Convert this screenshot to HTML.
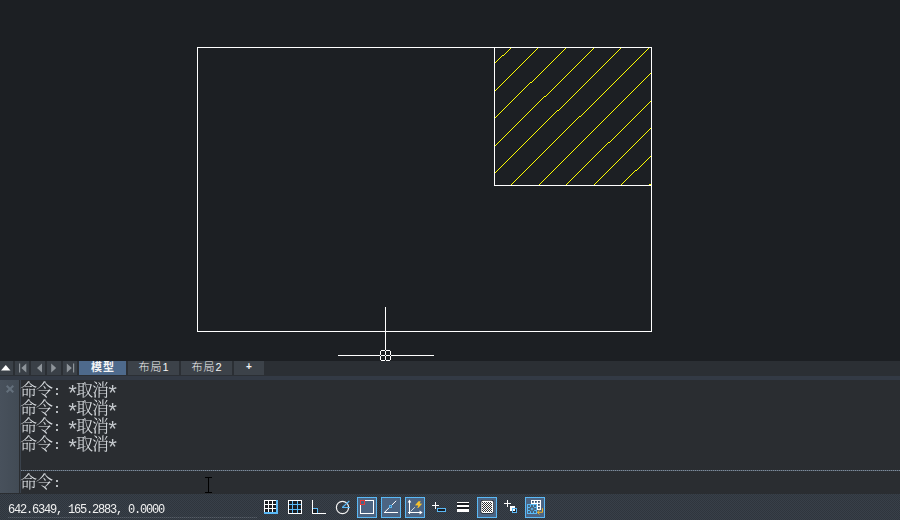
<!DOCTYPE html>
<html lang="zh-CN">
<head>
<meta charset="utf-8">
<title>CAD</title>
<style>
html,body{margin:0;padding:0;}
body{width:900px;height:520px;overflow:hidden;background:#1c1f23;position:relative;font-family:"Liberation Sans","Noto Sans CJK SC",sans-serif;}
.abs{position:absolute;}
#canvas{left:0;top:0;width:900px;height:361px;background:#1c1f23;overflow:hidden;}
#tabbar{left:0;top:361px;width:900px;height:15px;background:#2b2f34;}
.nb{position:absolute;top:0;height:14px;width:14px;background:#3a4047;}
.tab{position:absolute;top:0;height:14px;background:#3c4249;color:#f4f4f4;font-size:11px;letter-spacing:1px;text-indent:1px;line-height:13px;text-align:center;white-space:nowrap;font-weight:300;}
.tab.on{background:#4e6a8c;font-weight:bold;}
#band{left:0;top:376px;width:900px;height:4px;background:#333a45;}
#cmd{left:0;top:380px;width:900px;height:114px;background:#2a2d31;}
#side{left:0;top:0;width:19px;height:113px;background:linear-gradient(90deg,#48515c,#424b55);}
#vline{left:20px;top:0;width:1px;height:113px;background:#3a424c;}
.cl{will-change:transform;position:absolute;left:21px;height:18px;line-height:18px;color:#dde1e5;white-space:pre;font-size:0;}
.cl .c{font-family:"Liberation Serif","Noto Serif CJK SC",serif;font-size:17px;letter-spacing:-1px;font-weight:300;display:inline-block;width:32px;vertical-align:top;line-height:18px;position:relative;top:2px;left:-1px;}
.cl .l{font-family:"Liberation Mono",monospace;font-size:13.333px;display:inline-block;vertical-align:top;line-height:18px;position:relative;top:3px;}
.cl .l i{color:#c4c8cc;font-style:normal;display:inline-block;width:8px;text-align:center;font-size:22px;line-height:18px;vertical-align:top;position:relative;top:4px;text-indent:-3px;}
#sep{left:21px;top:90px;width:879px;height:1px;background:repeating-linear-gradient(90deg,#7f8b98 0,#7f8b98 1px,#4a5664 1px,#4a5664 2px);}
#status{left:0;top:494px;width:900px;height:26px;background:#333942 repeating-conic-gradient(#384049 0 25%,#2f353d 0 50%) 0 0/2px 2px;}
#coords{will-change:transform;left:8px;top:10px;font-family:"Liberation Mono",monospace;font-size:12px;letter-spacing:-1.2px;color:#f0f0f0;line-height:12px;white-space:pre;}
#uline{left:8px;top:23px;width:249px;height:1px;background:repeating-linear-gradient(90deg,#565d66 0,#565d66 1px,#3b424b 1px,#3b424b 2px);}
</style>
</head>
<body>
<div id="canvas" class="abs">
<svg width="900" height="361" viewBox="0 0 900 361" shape-rendering="crispEdges" style="position:absolute;left:0;top:0">
  <path id="hatch" d="M510 48.5h1m-2 1h1m-2 1h1m-2 1h1m-2 1h1m-2 1h1m-2 1h1m-3 1h2m-3 1h1m-2 1h1m-2 1h1m-2 1h1m-2 1h1m-2 1h1m-2 1h1M537 48.5h1m-2 1h1m-2 1h1m-2 1h1m-2 1h1m-2 1h1m-2 1h1m-2 1h1m-2 1h1m-2 1h1m-2 1h1m-2 1h1m-2 1h1m-2 1h1m-2 1h1m-2 1h1m-2 1h1m-2 1h1m-2 1h1m-2 1h1m-2 1h1m-2 1h1m-2 1h1m-2 1h1m-2 1h1m-2 1h1m-2 1h1m-2 1h1m-2 1h1m-2 1h1m-2 1h1m-2 1h1m-2 1h1m-2 1h1m-2 1h1m-2 1h1m-2 1h1m-2 1h1m-2 1h1m-2 1h1m-2 1h1m-2 1h1m-2 1h1M565 48.5h1m-2 1h1m-2 1h1m-2 1h1m-2 1h1m-2 1h1m-2 1h1m-2 1h1m-2 1h1m-2 1h1m-2 1h1m-2 1h1m-2 1h1m-2 1h1m-2 1h1m-2 1h1m-2 1h1m-2 1h1m-2 1h1m-2 1h1m-2 1h1m-2 1h1m-2 1h1m-2 1h1m-2 1h1m-2 1h1m-2 1h1m-2 1h1m-2 1h1m-2 1h1m-2 1h1m-2 1h1m-2 1h1m-2 1h1m-3 1h2m-3 1h1m-2 1h1m-2 1h1m-2 1h1m-2 1h1m-2 1h1m-2 1h1m-2 1h1m-2 1h1m-2 1h1m-2 1h1m-2 1h1m-2 1h1m-2 1h1m-2 1h1m-2 1h1m-2 1h1m-2 1h1m-2 1h1m-2 1h1m-2 1h1m-2 1h1m-2 1h1m-2 1h1m-2 1h1m-2 1h1m-2 1h1m-2 1h1m-2 1h1m-2 1h1m-2 1h1m-2 1h1m-2 1h1m-2 1h1m-2 1h1M593 48.5h1m-2 1h1m-2 1h1m-2 1h1m-2 1h1m-2 1h1m-2 1h1m-2 1h1m-2 1h1m-2 1h1m-2 1h1m-2 1h1m-2 1h1m-2 1h1m-2 1h1m-2 1h1m-2 1h1m-2 1h1m-2 1h1m-2 1h1m-2 1h1m-2 1h1m-2 1h1m-2 1h1m-2 1h1m-2 1h1m-2 1h1m-2 1h1m-2 1h1m-2 1h1m-2 1h1m-2 1h1m-2 1h1m-2 1h1m-2 1h1m-2 1h1m-2 1h1m-2 1h1m-2 1h1m-2 1h1m-2 1h1m-2 1h1m-2 1h1m-2 1h1m-2 1h1m-2 1h1m-2 1h1m-2 1h1m-3 1h2m-3 1h1m-2 1h1m-2 1h1m-2 1h1m-2 1h1m-2 1h1m-2 1h1m-2 1h1m-2 1h1m-2 1h1m-2 1h1m-2 1h1m-2 1h1m-2 1h1m-2 1h1m-2 1h1m-2 1h1m-2 1h1m-2 1h1m-2 1h1m-2 1h1m-2 1h1m-2 1h1m-2 1h1m-2 1h1m-2 1h1m-2 1h1m-2 1h1m-2 1h1m-2 1h1m-2 1h1m-2 1h1m-2 1h1m-2 1h1m-2 1h1m-2 1h1m-2 1h1m-2 1h1m-2 1h1m-2 1h1m-2 1h1m-2 1h1m-2 1h1m-2 1h1m-2 1h1m-2 1h1m-2 1h1m-2 1h1m-2 1h1M620 48.5h1m-2 1h1m-2 1h1m-2 1h1m-2 1h1m-2 1h1m-2 1h1m-2 1h1m-2 1h1m-2 1h1m-2 1h1m-2 1h1m-2 1h1m-2 1h1m-2 1h1m-2 1h1m-2 1h1m-2 1h1m-2 1h1m-2 1h1m-2 1h1m-2 1h1m-2 1h1m-2 1h1m-2 1h1m-2 1h1m-2 1h1m-2 1h1m-2 1h1m-2 1h1m-2 1h1m-2 1h1m-2 1h1m-2 1h1m-2 1h1m-2 1h1m-2 1h1m-2 1h1m-2 1h1m-2 1h1m-2 1h1m-2 1h1m-2 1h1m-2 1h1m-2 1h1m-2 1h1m-2 1h1m-2 1h1m-2 1h1m-2 1h1m-2 1h1m-2 1h1m-2 1h1m-2 1h1m-2 1h1m-2 1h1m-2 1h1m-2 1h1m-2 1h1m-2 1h1m-2 1h1m-2 1h1m-3 1h2m-3 1h1m-2 1h1m-2 1h1m-2 1h1m-2 1h1m-2 1h1m-2 1h1m-2 1h1m-2 1h1m-2 1h1m-2 1h1m-2 1h1m-2 1h1m-2 1h1m-2 1h1m-2 1h1m-2 1h1m-2 1h1m-2 1h1m-2 1h1m-2 1h1m-2 1h1m-2 1h1m-2 1h1m-2 1h1m-2 1h1m-2 1h1m-2 1h1m-2 1h1m-2 1h1m-2 1h1m-2 1h1m-2 1h1m-2 1h1m-2 1h1m-2 1h1m-2 1h1m-2 1h1m-2 1h1m-2 1h1m-2 1h1m-2 1h1m-2 1h1m-2 1h1m-2 1h1m-2 1h1m-2 1h1m-2 1h1m-2 1h1m-2 1h1m-2 1h1m-2 1h1m-2 1h1m-2 1h1m-2 1h1m-2 1h1m-2 1h1m-2 1h1m-2 1h1m-2 1h1m-2 1h1m-2 1h1M648 48.5h1m-2 1h1m-2 1h1m-2 1h1m-2 1h1m-2 1h1m-2 1h1m-2 1h1m-2 1h1m-2 1h1m-2 1h1m-2 1h1m-2 1h1m-2 1h1m-2 1h1m-2 1h1m-2 1h1m-2 1h1m-2 1h1m-2 1h1m-2 1h1m-2 1h1m-2 1h1m-2 1h1m-2 1h1m-2 1h1m-2 1h1m-2 1h1m-2 1h1m-2 1h1m-2 1h1m-2 1h1m-2 1h1m-2 1h1m-2 1h1m-2 1h1m-2 1h1m-2 1h1m-2 1h1m-2 1h1m-2 1h1m-2 1h1m-2 1h1m-2 1h1m-2 1h1m-2 1h1m-2 1h1m-2 1h1m-2 1h1m-2 1h1m-2 1h1m-2 1h1m-2 1h1m-2 1h1m-2 1h1m-2 1h1m-2 1h1m-2 1h1m-2 1h1m-2 1h1m-2 1h1m-2 1h1m-2 1h1m-2 1h1m-2 1h1m-2 1h1m-2 1h1m-2 1h1m-3 1h2m-3 1h1m-2 1h1m-2 1h1m-2 1h1m-2 1h1m-2 1h1m-2 1h1m-2 1h1m-2 1h1m-2 1h1m-2 1h1m-2 1h1m-2 1h1m-2 1h1m-2 1h1m-2 1h1m-2 1h1m-2 1h1m-2 1h1m-2 1h1m-2 1h1m-2 1h1m-2 1h1m-2 1h1m-2 1h1m-2 1h1m-2 1h1m-2 1h1m-2 1h1m-2 1h1m-2 1h1m-2 1h1m-2 1h1m-2 1h1m-2 1h1m-2 1h1m-2 1h1m-2 1h1m-2 1h1m-2 1h1m-2 1h1m-2 1h1m-2 1h1m-2 1h1m-2 1h1m-2 1h1m-2 1h1m-2 1h1m-2 1h1m-2 1h1m-2 1h1m-2 1h1m-2 1h1m-2 1h1m-2 1h1m-2 1h1m-2 1h1m-2 1h1m-2 1h1m-2 1h1m-2 1h1m-2 1h1m-2 1h1m-2 1h1m-2 1h1m-2 1h1m-2 1h1m-2 1h1M650 73.5h1m-2 1h1m-2 1h1m-2 1h1m-2 1h1m-2 1h1m-2 1h1m-2 1h1m-2 1h1m-2 1h1m-2 1h1m-2 1h1m-2 1h1m-2 1h1m-2 1h1m-2 1h1m-2 1h1m-2 1h1m-2 1h1m-2 1h1m-2 1h1m-2 1h1m-2 1h1m-2 1h1m-2 1h1m-2 1h1m-2 1h1m-2 1h1m-2 1h1m-2 1h1m-2 1h1m-2 1h1m-2 1h1m-2 1h1m-2 1h1m-2 1h1m-2 1h1m-2 1h1m-2 1h1m-2 1h1m-2 1h1m-2 1h1m-2 1h1m-2 1h1m-2 1h1m-2 1h1m-2 1h1m-2 1h1m-2 1h1m-2 1h1m-2 1h1m-2 1h1m-2 1h1m-2 1h1m-2 1h1m-2 1h1m-2 1h1m-2 1h1m-2 1h1m-2 1h1m-2 1h1m-2 1h1m-2 1h1m-2 1h1m-2 1h1m-2 1h1m-2 1h1m-2 1h1m-2 1h1m-2 1h1m-2 1h1m-2 1h1m-2 1h1m-2 1h1m-2 1h1m-2 1h1m-2 1h1m-2 1h1m-2 1h1m-2 1h1m-2 1h1m-2 1h1m-2 1h1m-2 1h1m-2 1h1m-2 1h1m-2 1h1m-2 1h1m-2 1h1m-2 1h1m-2 1h1m-2 1h1m-2 1h1m-2 1h1m-2 1h1m-2 1h1m-2 1h1m-2 1h1m-2 1h1m-2 1h1m-2 1h1m-2 1h1m-2 1h1m-2 1h1m-2 1h1m-2 1h1m-2 1h1m-2 1h1m-2 1h1m-2 1h1m-2 1h1m-2 1h1M650 101.5h1m-2 1h1m-2 1h1m-2 1h1m-2 1h1m-2 1h1m-2 1h1m-2 1h1m-2 1h1m-2 1h1m-2 1h1m-2 1h1m-2 1h1m-2 1h1m-2 1h1m-2 1h1m-2 1h1m-2 1h1m-2 1h1m-2 1h1m-2 1h1m-2 1h1m-2 1h1m-2 1h1m-2 1h1m-2 1h1m-2 1h1m-2 1h1m-2 1h1m-2 1h1m-2 1h1m-2 1h1m-2 1h1m-2 1h1m-2 1h1m-2 1h1m-2 1h1m-2 1h1m-2 1h1m-2 1h1m-2 1h1m-3 1h2m-3 1h1m-2 1h1m-2 1h1m-2 1h1m-2 1h1m-2 1h1m-2 1h1m-2 1h1m-2 1h1m-2 1h1m-2 1h1m-2 1h1m-2 1h1m-2 1h1m-2 1h1m-2 1h1m-2 1h1m-2 1h1m-2 1h1m-2 1h1m-2 1h1m-2 1h1m-2 1h1m-2 1h1m-2 1h1m-2 1h1m-2 1h1m-2 1h1m-2 1h1m-2 1h1m-2 1h1m-2 1h1m-2 1h1m-2 1h1m-2 1h1m-2 1h1m-2 1h1m-2 1h1m-2 1h1m-2 1h1m-2 1h1m-2 1h1M650 128.5h1m-2 1h1m-2 1h1m-2 1h1m-2 1h1m-2 1h1m-2 1h1m-2 1h1m-2 1h1m-2 1h1m-2 1h1m-2 1h1m-2 1h1m-2 1h1m-2 1h1m-2 1h1m-2 1h1m-2 1h1m-2 1h1m-2 1h1m-2 1h1m-2 1h1m-2 1h1m-2 1h1m-2 1h1m-2 1h1m-2 1h1m-2 1h1m-2 1h1m-2 1h1m-2 1h1m-2 1h1m-2 1h1m-2 1h1m-2 1h1m-2 1h1m-2 1h1m-2 1h1m-2 1h1m-2 1h1m-2 1h1m-2 1h1m-2 1h1m-2 1h1m-2 1h1m-2 1h1m-2 1h1m-2 1h1m-2 1h1m-2 1h1m-2 1h1m-2 1h1m-2 1h1m-2 1h1m-2 1h1m-2 1h1m-2 1h1M650 156.5h1m-2 1h1m-2 1h1m-2 1h1m-2 1h1m-2 1h1m-2 1h1m-2 1h1m-2 1h1m-2 1h1m-2 1h1m-2 1h1m-2 1h1m-2 1h1m-3 1h2m-3 1h1m-2 1h1m-2 1h1m-2 1h1m-2 1h1m-2 1h1m-2 1h1m-2 1h1m-2 1h1m-2 1h1m-2 1h1m-2 1h1m-2 1h1m-2 1h1M649 184.5h2" stroke="#ffff00" stroke-width="1" fill="none"/>
  <g stroke="#ffffff" stroke-width="1" fill="none">
    <rect x="197.5" y="47.5" width="454" height="284"/>
    <path d="M494.5 47.5V185.5H651.5"/>
    <path d="M385.5 307V350M385.5 351V355M385.5 356V360M338 355.5H380M381 355.5H385M386 355.5H390M391 355.5H434"/>
    <path d="M381 350.5H385M386 350.5H390M381 360.5H385M386 360.5H390M380.5 351V355M380.5 356V360M390.5 351V355M390.5 356V360"/>
  </g>
</svg>
</div>

<div id="tabbar" class="abs">
  <div class="nb" style="left:0;width:13px"></div>
  <div class="nb" style="left:15px"></div>
  <div class="nb" style="left:31px"></div>
  <div class="nb" style="left:47px"></div>
  <div class="nb" style="left:63px"></div>
  <svg class="abs" style="left:0;top:0" width="80" height="14" viewBox="0 0 80 14">
    <path d="M1 9.5H10.5L5.75 4z" fill="#ffffff"/>
    <g fill="#8e949a">
      <rect x="19" y="2.5" width="1.2" height="9"/>
      <path d="M26.3 2.5V11.5L21.3 7z"/>
      <path d="M42 2.5V11.5L37 7z"/>
      <path d="M51.2 2.5V11.5L56.2 7z"/>
      <path d="M66.8 2.5V11.5L71.8 7z"/>
      <rect x="73" y="2.5" width="1.2" height="9"/>
    </g>
  </svg>
  <div class="tab on" style="left:79px;width:47px">模型</div>
  <div class="tab" style="left:128px;width:51px">布局1</div>
  <div class="tab" style="left:181px;width:51px">布局2</div>
  <div class="tab" style="left:234px;width:30px;font-weight:bold;font-size:10px;line-height:12px">+</div>
</div>
<div id="band" class="abs"></div>

<div id="cmd" class="abs">
  <div id="side" class="abs"></div>
  <svg class="abs" style="left:0;top:0" width="19" height="19" viewBox="0 0 19 19"><path d="M6.7 5.7L13.3 12.3M13.3 5.7L6.7 12.3" stroke="#64707c" stroke-width="2" fill="none"/></svg>
  <div id="vline" class="abs"></div>
  <div class="cl" style="top:0px"><span class="c">命令</span><span class="l">: <i>*</i></span><span class="c">取消</span><span class="l"><i>*</i></span></div>
  <div class="cl" style="top:18px"><span class="c">命令</span><span class="l">: <i>*</i></span><span class="c">取消</span><span class="l"><i>*</i></span></div>
  <div class="cl" style="top:36px"><span class="c">命令</span><span class="l">: <i>*</i></span><span class="c">取消</span><span class="l"><i>*</i></span></div>
  <div class="cl" style="top:54px"><span class="c">命令</span><span class="l">: <i>*</i></span><span class="c">取消</span><span class="l"><i>*</i></span></div>
  <div id="sep" class="abs"></div>
  <div class="cl" style="top:92px"><span class="c">命令</span><span class="l">:</span></div>
  <svg class="abs" style="left:204px;top:96px" width="9" height="18" viewBox="0 0 9 18" shape-rendering="crispEdges"><path d="M1 1.5H8M1 16.5H8M4.5 1V17" stroke="#000" stroke-width="1" fill="none"/></svg>
</div>

<div id="status" class="abs">
  <div id="coords" class="abs">642.6349, 165.2883, 0.0000</div>
  <div id="uline" class="abs"></div>
  <svg class="abs" style="left:0;top:0" width="900" height="26" viewBox="0 494 900 26">
    <defs><pattern id="chk" x="0" y="0" width="2" height="2" patternUnits="userSpaceOnUse"><rect width="2" height="2" fill="#fff"/><rect x="0" y="0" width="1" height="1" fill="#333"/><rect x="1" y="1" width="1" height="1" fill="#333"/></pattern></defs>
    <g shape-rendering="crispEdges">
      <!-- grid display -->
      <rect x="264" y="500" width="14" height="14" fill="#1a1d22"/>
      <path d="M264.5 500V512M268.5 500V512M272.5 500V512M264 500.5H276M264 504.5H276M264 508.5H276" stroke="#fff" stroke-width="1" fill="none"/>
      <rect x="276" y="500" width="2" height="14" fill="#5ab9f6"/><rect x="264" y="512" width="14" height="2" fill="#5ab9f6"/>
      <!-- snap grid -->
      <rect x="288.5" y="500.5" width="13" height="13" fill="#1a1d22" stroke="#fff" stroke-width="1"/>
      <path d="M292.5 501V513M297.5 501V513M289 504.5H301M289 509.5H301" stroke="#5ab9f6" stroke-width="1" fill="none"/>
      <!-- ortho -->
      <rect x="313" y="509" width="4" height="4" fill="#1a1d22"/>
      <path d="M313 508.5H318M317.5 508V513" stroke="#5ab9f6" stroke-width="1" fill="none"/>
      <path d="M312.5 500V514M312 513.5H326" stroke="#fff" stroke-width="1" fill="none"/>
      <!-- active boxes -->
      <rect x="357.5" y="497.5" width="19" height="20" fill="#4c6482" stroke="#5ab9f6" stroke-width="1"/><rect x="381.5" y="497.5" width="19" height="20" fill="#4c6482" stroke="#5ab9f6" stroke-width="1"/><rect x="405.5" y="497.5" width="19" height="20" fill="#4c6482" stroke="#5ab9f6" stroke-width="1"/><rect x="477.5" y="497.5" width="19" height="20" fill="#4c6482" stroke="#5ab9f6" stroke-width="1"/><rect x="525.5" y="497.5" width="19" height="20" fill="#4c6482" stroke="#5ab9f6" stroke-width="1"/>
      <!-- osnap -->
      <rect x="360.5" y="500.5" width="13" height="13" fill="none" stroke="#fff" stroke-width="1"/>
      <rect x="360.5" y="500.5" width="4" height="4" fill="none" stroke="#e53b3b" stroke-width="1"/>
      <!-- lineweight -->
      <rect x="457" y="502" width="12" height="10" fill="#1a1d22"/>
      <rect x="457" y="502" width="12" height="1" fill="#fff"/><rect x="457" y="505" width="12" height="2" fill="#fff"/><rect x="457" y="509" width="12" height="3" fill="#fff"/>
      <!-- dyn input -->
      <path d="M435.5 502V509M432 505.5H439" stroke="#fff" stroke-width="1" fill="none"/>
      <rect x="437.5" y="508.5" width="8" height="3" fill="#1a1d22" stroke="#5ab9f6" stroke-width="1"/>
      <!-- selection cycling -->
      <path d="M507.5 500V507M504 503.5H511" stroke="#fff" stroke-width="1" fill="none"/>
      <rect x="510" y="506" width="5" height="5" fill="#fff"/>
      <rect x="515" y="509" width="1" height="3" fill="#1a1d22"/><rect x="513" y="511" width="3" height="1" fill="#1a1d22"/>
      <rect x="512.5" y="508.5" width="4" height="4" fill="none" stroke="#5ab9f6" stroke-width="1"/>
      <!-- workspace -->
      <rect x="531" y="500" width="10" height="10" fill="#fff"/>
      <path d="M532 501h1.8v1.8h-1.8zM535 501h1.8v1.8h-1.8zM538 501h1.8v1.8h-1.8zM538 504h1.8v1.8h-1.8zM538 507h1.8v1.8h-1.8z" fill="#2f4a6a" shape-rendering="auto"/>
      <rect x="527" y="504" width="10" height="10" fill="#5ab9f6"/>
      <path d="M528 505.2h2v1.5h-2zM531 505.2h2v1.5h-2zM534 505.2h2v1.5h-2zM528 508.2h2v1.5h-2zM534.2 508.2h2v1.5h-2zM528 511.3h2v1.5h-2zM531 511.3h2v1.5h-2zM534 511.3h2v1.5h-2z" fill="#3d4855" shape-rendering="auto"/>
      <rect x="530.4" y="507.4" width="3.3" height="3.3" fill="#5ab9f6" stroke="#4a5a6c" stroke-width="0.9" shape-rendering="auto"/>
      <rect x="531.6" y="508.6" width="0.9" height="0.9" fill="#4a5a6c" shape-rendering="auto"/>
    </g>
    <!-- polar -->
    <circle cx="342.5" cy="507.5" r="6.1" fill="none" stroke="#f4f4f4" stroke-width="1.2"/>
    <path d="M342 507.5H350M342.3 507.5L349.3 501" stroke="#5ab9f6" stroke-width="1.1" fill="none"/>
    <!-- otrack -->
    <path d="M384 512.5H398" stroke="#fff" stroke-width="1.2" fill="none" shape-rendering="crispEdges"/>
    <path d="M384.3 512.5L396.2 500.8" stroke="#fff" stroke-width="1" fill="none"/>
    <rect x="389.5" y="505.5" width="2" height="2" fill="#3f6a92" stroke="#5ab9f6" stroke-width="1" shape-rendering="crispEdges"/>
    <!-- ucs -->
    <path d="M409.5 501V514M408 512.5H421" stroke="#fff" stroke-width="1.2" fill="none" shape-rendering="crispEdges"/>
    <path d="M409.5 499.6L411.3 502.6H407.7zM422.6 512.5L419.6 510.6V514.4z" fill="#fff"/>
    <path d="M410.5 511.5L414.8 507.3" stroke="#e8e8e8" stroke-width="0.9" fill="none"/>
    <path d="M418.5 501.2H420.8L419.6 503.6L422.2 503.8L418.2 507.9H417.3L418.3 505.6L415 505.2z" fill="#f5c12c"/>
    <!-- transparency -->
    <rect x="480.5" y="500" width="13.5" height="13.7" rx="2.2" fill="#25282d"/>
    <rect x="481.3" y="500.8" width="11.9" height="12.1" rx="1.6" fill="#fff"/>
    <rect x="482" y="502" width="10" height="10" fill="url(#chk)" shape-rendering="crispEdges"/>
    <!-- workspace arrow -->
    <path d="M542.5 508.2V512.3H537.6M539.6 510.2L537.4 512.3L539.6 514.5" stroke="#f0b429" stroke-width="1" fill="none"/>
  </svg>
</div>

</body>
</html>
